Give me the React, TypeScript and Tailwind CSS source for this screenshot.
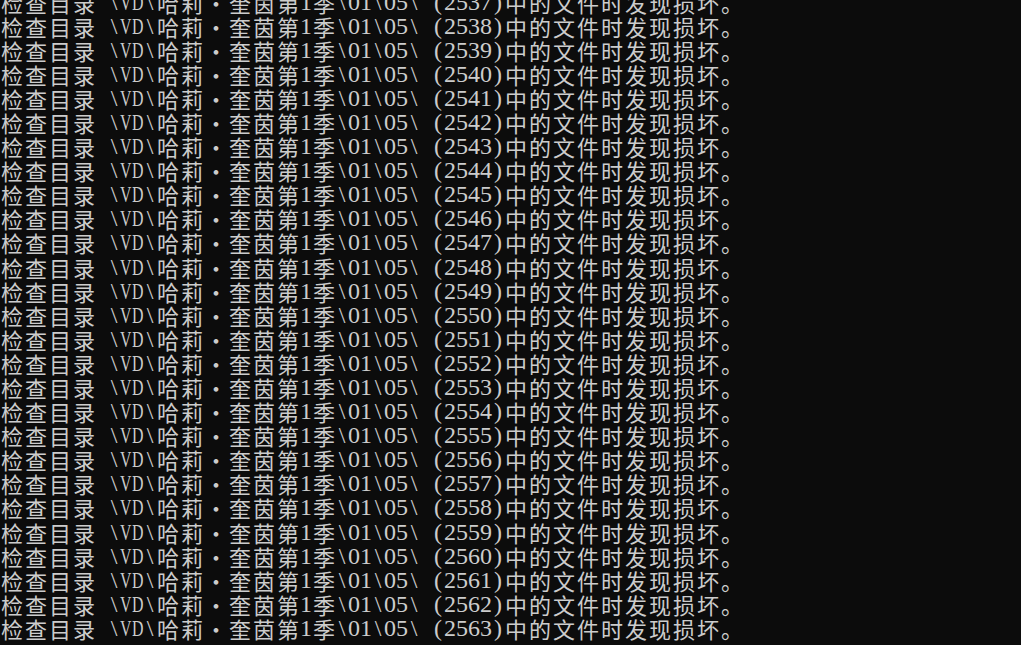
import React from "react";

const FIRST = 2537;
const LAST = 2563;

// full-width glyphs take two console cells
const isWide = (ch: string) => ch.charCodeAt(0) >= 0x2e80;
// serif capitals are wider than a console cell, squeeze them
const isCap = (ch: string) => /[A-Z]/.test(ch);

function ConsoleLine({ text }: { text: string }) {
  return (
    <div className="flex h-[24.1px] shrink-0 whitespace-pre">
      {Array.from(text).map((ch, i) => {
        if (isWide(ch)) {
          return (
            <span
              key={i}
              className="flex h-full w-[24px] shrink-0 items-center justify-center font-['Noto_Sans_CJK_SC',sans-serif] text-[22px] leading-none"
            >
              {ch}
            </span>
          );
        }
        return (
          <span
            key={i}
            className="flex h-full w-[12px] shrink-0 items-center justify-center font-['Liberation_Serif',serif] text-[24px] leading-none"
          >
            {isCap(ch) ? (
              <span className="inline-block scale-x-[0.66]">{ch}</span>
            ) : (
              ch
            )}
          </span>
        );
      })}
    </div>
  );
}

export default function App() {
  const lines: string[] = [];
  for (let n = FIRST; n <= LAST; n++) {
    lines.push(`检查目录 \\VD\\哈莉・奎茵第1季\\01\\05\\ (${n})中的文件时发现损坏。`);
  }

  return (
    <div className="flex h-screen w-full flex-col justify-end overflow-hidden bg-[#0c0c0c] pb-[5px] text-[#cccccc]">
      {lines.map((l, i) => (
        <ConsoleLine key={i} text={l} />
      ))}
    </div>
  );
}
